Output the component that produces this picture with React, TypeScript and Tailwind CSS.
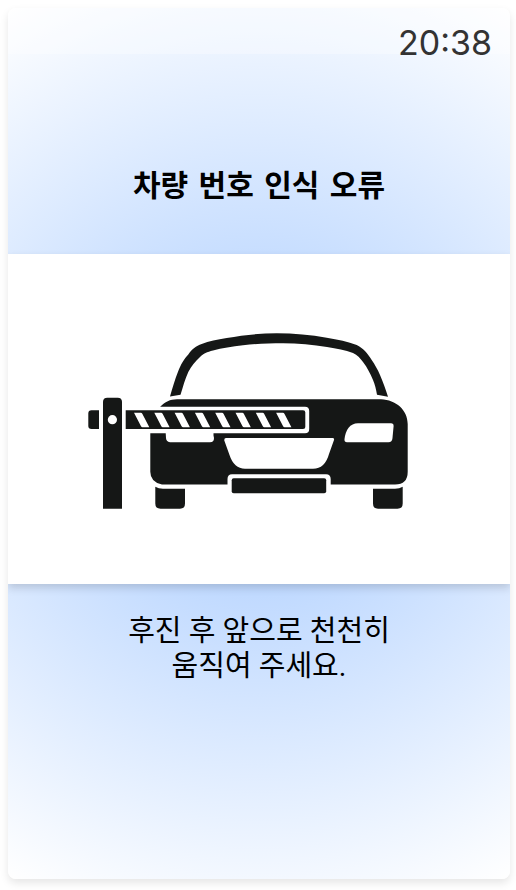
const STRIPES = [0, 20.3, 40.6, 60.9, 81.2, 101.5, 121.8, 142.1];

function BarrierIllustration() {
  return (
    <svg viewBox="8 254 502 330" className="block w-full" role="img" aria-label="차량과 차단기">
      <g fill="#151716">
        <path d="M170 396.500C172.500 388 175 379 178 371.700C181 364 184 359 188.300 354.500C192 349 196 346 201.700 344C209 341 217 339.500 226.700 338C243 335 260 333.300 276.700 333.300C294 333.300 311 335 326.700 337.700C338 339.500 348 341.500 356.700 345C363 348 367.500 353 371.700 360C375 365 377.500 369 380 375C383 382 385.500 389 388 396.700L377 394.700C376 389 375 384.500 373 380C370 373 367.500 368 363 362C360 358 357.500 355 353 353C345 350 337 348.500 327 347C313 344.800 298 343.300 283 343.300C269 343.300 256 343.800 243 345.200C232 346.500 222 348 213 350.500C207 352 203.500 353.500 200 357C195 361.500 191.500 366 188.300 372C185 379 183 387 180.500 394.700Z" />
        <path d="M150.300 471.700V433.300L160.300 406.700C165 402 170 399.300 177 399.300H381C396 400 407.700 410 407.700 424V471.700Q407.700 484.500 395 484.500H330.700V479Q330.700 474.300 326 474.300H232Q227.500 474.300 227.500 479V484.500H162Q150.300 482 150.300 471.700Z" />
        <path d="M155.300 486.700Q158.500 488.700 163 488.700H185V503.500Q185 508.700 180 508.700H160.500Q155.300 508.700 155.300 503.500Z" />
        <path d="M402.700 486.700Q399.500 488.700 395 488.700H373V503.500Q373 508.700 378 508.700H397.500Q402.700 508.700 402.700 503.500Z" />
        <rect x="231.700" y="478.300" width="94.500" height="15" rx="2" />
      </g>
      <g fill="#fff">
        <path d="M125 406.700H305Q309.200 406.700 309.200 411V429Q309.200 433.300 305 433.300H125Z" />
        <path d="M165.700 433H213.500V435.500L214 438Q214 442.300 210 442.300H170Q166 441.500 166 438Z" />
        <path d="M226 438H332.500Q334.500 438 334 440L329 454Q325 468.700 313 468.700H245Q234 468.700 229.500 455L224.300 440.500Q224 438 226 438Z" />
        <path d="M344.500 439C345.500 430 350 423.300 358 423.300H391Q393.700 423.300 393.600 426L392.500 438Q392 442.300 388.500 442.300H347Q344.200 442.300 344.500 439Z" />
      </g>
      <g fill="#151716">
        <path d="M99 410.300H91.500Q88.300 410.300 88.300 413.500V426Q88.300 429 91.500 429H99Z" />
        <path d="M103 508.700V402Q103 397.700 107.300 397.700H117.700Q122 397.700 122 402V508.700Z" />
        <path d="M125.700 410.300H303Q305.300 410.300 305.300 412.500V427Q305.300 429 303 429H125.700Z" />
      </g>
      <circle cx="112.400" cy="419.700" r="4.600" fill="#fff" />
      {STRIPES.map((x) => (
        <path
          key={x}
          transform={`translate(${x} 0)`}
          d="M134 412.700H140.800Q141.800 412.700 142.300 413.700L149.300 427.200H142.500Q141.500 427.200 141 426.200Z"
          fill="#fff"
        />
      ))}
    </svg>
  );
}

export default function App() {
  return (
    <div className="min-h-screen bg-white pt-2 pr-1.5 pb-[11px] pl-2 text-black">
      <main className="flex min-h-[calc(100vh-19px)] flex-col overflow-hidden rounded-lg bg-[radial-gradient(circle_at_center,#a6caff,#ffffff)] shadow-[0_4px_8px_rgba(0,0,0,0.1)]">
        <header className="flex h-[46px] items-end justify-end bg-white/30 pr-[18px]">
          <time className="-mb-3 font-['Inter',sans-serif] text-[34px] leading-[46px] font-normal text-[#333]">
            20:38
          </time>
        </header>
        <h1 className="flex h-[200px] items-end justify-center pb-12 text-center font-['DejaVu_Sans','Noto_Sans_CJK_KR',sans-serif] text-[30px] leading-[40px] font-bold">
          차량 번호 인식 오류
        </h1>
        <section className="bg-white shadow-[0_4px_8px_rgba(0,0,0,0.15)]">
          <BarrierIllustration />
        </section>
        <p className="pt-[30px] text-center font-['Roboto','Noto_Sans_CJK_KR',sans-serif] text-[29px] leading-[35px]">
          후진 후 앞으로 천천히
          <br />
          움직여 주세요.
        </p>
      </main>
    </div>
  );
}
